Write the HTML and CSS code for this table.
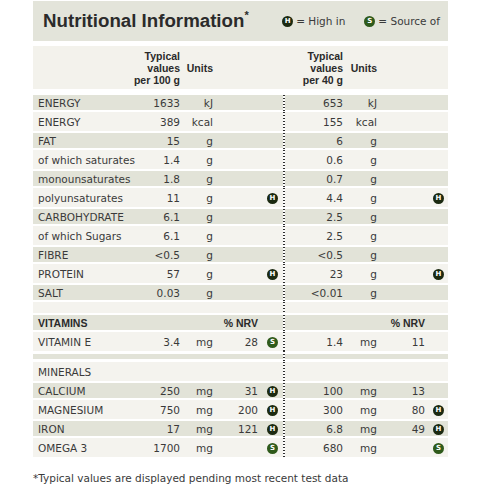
FILE: index.html
```html
<!DOCTYPE html>
<html lang="en">
<head>
	<meta charset="UTF-8">
	<title>Nutritional Information</title>
	<meta name="viewport" content="width=device-width, initial-scale=1">
	<link rel="stylesheet" href="styles.css">
</head>
<body>
	<div class="panel">
		<div class="title-bar">
			<h1>Nutritional Information<sup>*</sup></h1>
			<p class="legend">
				<span class="ico ico-h">H</span><span class="legend-txt">= High in</span>
				<span class="ico ico-s">S</span><span class="legend-txt">= Source of</span>
			</p>
		</div>

		<table class="nutri">
			<colgroup>
				<col class="c-name"><col class="c-val"><col class="c-unit"><col class="c-nrv"><col class="c-ico">
				<col class="c-sep">
				<col class="c-val2"><col class="c-unit2"><col class="c-nrv2"><col class="c-ico2">
			</colgroup>
			<thead>
				<tr>
					<th></th>
					<th class="num">Typical<br>values<br>per 100 g</th>
					<th class="num">Units</th>
					<th></th><th></th><th></th>
					<th class="num">Typical<br>values<br>per 40 g</th>
					<th class="num">Units</th>
					<th></th><th></th>
				</tr>
			</thead>
			<tbody>
				<tr class="dk"><td class="name">ENERGY</td><td class="num">1633</td><td class="num">kJ</td><td></td><td></td><td class="sep"></td><td class="num">653</td><td class="num">kJ</td><td></td><td></td></tr>
				<tr class="lt"><td class="name">ENERGY</td><td class="num">389</td><td class="num">kcal</td><td></td><td></td><td class="sep"></td><td class="num">155</td><td class="num">kcal</td><td></td><td></td></tr>
				<tr class="dk"><td class="name">FAT</td><td class="num">15</td><td class="num">g</td><td></td><td></td><td class="sep"></td><td class="num">6</td><td class="num">g</td><td></td><td></td></tr>
				<tr class="lt"><td class="name">of which saturates</td><td class="num">1.4</td><td class="num">g</td><td></td><td></td><td class="sep"></td><td class="num">0.6</td><td class="num">g</td><td></td><td></td></tr>
				<tr class="dk"><td class="name">monounsaturates</td><td class="num">1.8</td><td class="num">g</td><td></td><td></td><td class="sep"></td><td class="num">0.7</td><td class="num">g</td><td></td><td></td></tr>
				<tr class="lt"><td class="name">polyunsaturates</td><td class="num">11</td><td class="num">g</td><td></td><td class="ic"><span class="ico ico-h">H</span></td><td class="sep"></td><td class="num">4.4</td><td class="num">g</td><td></td><td class="ic"><span class="ico ico-h">H</span></td></tr>
				<tr class="dk"><td class="name">CARBOHYDRATE</td><td class="num">6.1</td><td class="num">g</td><td></td><td></td><td class="sep"></td><td class="num">2.5</td><td class="num">g</td><td></td><td></td></tr>
				<tr class="lt"><td class="name">of which Sugars</td><td class="num">6.1</td><td class="num">g</td><td></td><td></td><td class="sep"></td><td class="num">2.5</td><td class="num">g</td><td></td><td></td></tr>
				<tr class="dk"><td class="name">FIBRE</td><td class="num">&lt;0.5</td><td class="num">g</td><td></td><td></td><td class="sep"></td><td class="num">&lt;0.5</td><td class="num">g</td><td></td><td></td></tr>
				<tr class="lt"><td class="name">PROTEIN</td><td class="num">57</td><td class="num">g</td><td></td><td class="ic"><span class="ico ico-h">H</span></td><td class="sep"></td><td class="num">23</td><td class="num">g</td><td></td><td class="ic"><span class="ico ico-h">H</span></td></tr>
				<tr class="dk"><td class="name">SALT</td><td class="num">0.03</td><td class="num">g</td><td></td><td></td><td class="sep"></td><td class="num">&lt;0.01</td><td class="num">g</td><td></td><td></td></tr>

				<tr class="gap-lt"><td></td><td></td><td></td><td></td><td></td><td class="sep"></td><td></td><td></td><td></td><td></td></tr>

				<tr class="dk"><td class="name bold">VITAMINS</td><td></td><td></td><td class="num bold">% NRV</td><td></td><td class="sep"></td><td></td><td></td><td class="num bold">% NRV</td><td></td></tr>
				<tr class="lt"><td class="name">VITAMIN E</td><td class="num">3.4</td><td class="num">mg</td><td class="num">28</td><td class="ic"><span class="ico ico-s">S</span></td><td class="sep"></td><td class="num">1.4</td><td class="num">mg</td><td class="num">11</td><td></td></tr>

				<tr class="gap-dk"><td></td><td></td><td></td><td></td><td></td><td class="sep"></td><td></td><td></td><td></td><td></td></tr>

				<tr class="lt"><td class="name">MINERALS</td><td></td><td></td><td></td><td></td><td class="sep"></td><td></td><td></td><td></td><td></td></tr>
				<tr class="dk"><td class="name">CALCIUM</td><td class="num">250</td><td class="num">mg</td><td class="num">31</td><td class="ic"><span class="ico ico-h">H</span></td><td class="sep"></td><td class="num">100</td><td class="num">mg</td><td class="num">13</td><td></td></tr>
				<tr class="lt"><td class="name">MAGNESIUM</td><td class="num">750</td><td class="num">mg</td><td class="num">200</td><td class="ic"><span class="ico ico-h">H</span></td><td class="sep"></td><td class="num">300</td><td class="num">mg</td><td class="num">80</td><td class="ic"><span class="ico ico-h">H</span></td></tr>
				<tr class="dk"><td class="name">IRON</td><td class="num">17</td><td class="num">mg</td><td class="num">121</td><td class="ic"><span class="ico ico-h">H</span></td><td class="sep"></td><td class="num">6.8</td><td class="num">mg</td><td class="num">49</td><td class="ic"><span class="ico ico-h">H</span></td></tr>
				<tr class="lt"><td class="name">OMEGA 3</td><td class="num">1700</td><td class="num">mg</td><td></td><td class="ic"><span class="ico ico-s">S</span></td><td class="sep"></td><td class="num">680</td><td class="num">mg</td><td></td><td class="ic"><span class="ico ico-s">S</span></td></tr>
			</tbody>
		</table>

		<p class="footnote">*Typical values are displayed pending most recent test data</p>
	</div>
</body>
</html>
```

FILE: styles.css
```css
body { margin: 0; font-family: "DejaVu Sans", sans-serif; color: #3a3a3a; background: #fff; }

.panel { width: 415px; margin: 1px 0 0 33px; }

/* title bar */
.title-bar { display: flex; align-items: center; justify-content: space-between; height: 40px; padding: 0 8px 0 10px; margin-bottom: 5px; background: #e3e4da; }
.title-bar h1 { margin: 0; font: bold 18.7px "Liberation Sans", Arial, sans-serif; color: #2b2b2b; }
.title-bar h1 sup { font-size: 11px; vertical-align: top; position: relative; top: -1px; }
.legend { display: flex; align-items: center; margin: 0; font-size: 10.5px; color: #3a3a3a; }
.legend .ico { margin-right: 3px; }
.legend .legend-txt { margin-right: 19px; }
.legend .legend-txt:last-child { margin-right: 0; }

/* round H / S badges */
.ico { display: inline-block; width: 11px; height: 11px; border-radius: 50%; color: #fff; font: bold 7px/11px "DejaVu Sans", sans-serif; text-align: center; vertical-align: middle; }
.ico-h { background: #1c2a11; }
.ico-s { background: #2f5a1b; }

/* table */
.nutri { width: 415px; table-layout: fixed; border-collapse: separate; border-spacing: 0; font-size: 10.5px; }
.c-name { width: 95px; }
.c-val { width: 52px; }
.c-unit { width: 33px; }
.c-nrv { width: 45px; }
.c-ico { width: 25px; }
.c-sep { width: 2px; }
.c-val2 { width: 58px; }
.c-unit2 { width: 34px; }
.c-nrv2 { width: 48px; }
.c-ico2 { width: 23px; }

.nutri th,
.nutri td { padding: 0; white-space: nowrap; vertical-align: middle; }
.nutri thead th { height: 43px; background: #f3f2ec; border-bottom: 4px solid #fff; font: bold 10.5px/12px "Liberation Sans", Arial, sans-serif; color: #2a2a2a; }

.nutri .num { text-align: right; }
.nutri .name { padding-left: 5px; text-align: left; }
.nutri .bold { font: bold 10.5px "Liberation Sans", Arial, sans-serif; color: #2a2a2a; }
.nutri .ic { padding-left: 9px; }
.nutri .c-ico2 { }
.nutri tr td:last-child.ic { padding-left: 8px; }

.nutri tr.dk td { height: 15px; background: #e2e3d8; border-top: 2px solid #fff; border-bottom: 2px solid #fff; }
.nutri tr.lt td { height: 19px; background: #f4f3ee; }
.nutri tr.gap-lt td { height: 11px; background: #f4f3ee; }
.nutri tr.gap-dk td { height: 5px; background: #e2e3d8; border-top: 3px solid #fff; border-bottom: 3px solid #fff; }

/* dotted divider between the two halves */
.nutri tbody tr td.sep { background: linear-gradient(#2e2e2e 50%, transparent 50%) 0 0 / 2px 3px repeat-y; border-top-color: transparent; border-bottom-color: transparent; }

.footnote { margin: 14px 0 0; font-size: 10.5px; line-height: 14px; color: #3a3a3a; }
```
